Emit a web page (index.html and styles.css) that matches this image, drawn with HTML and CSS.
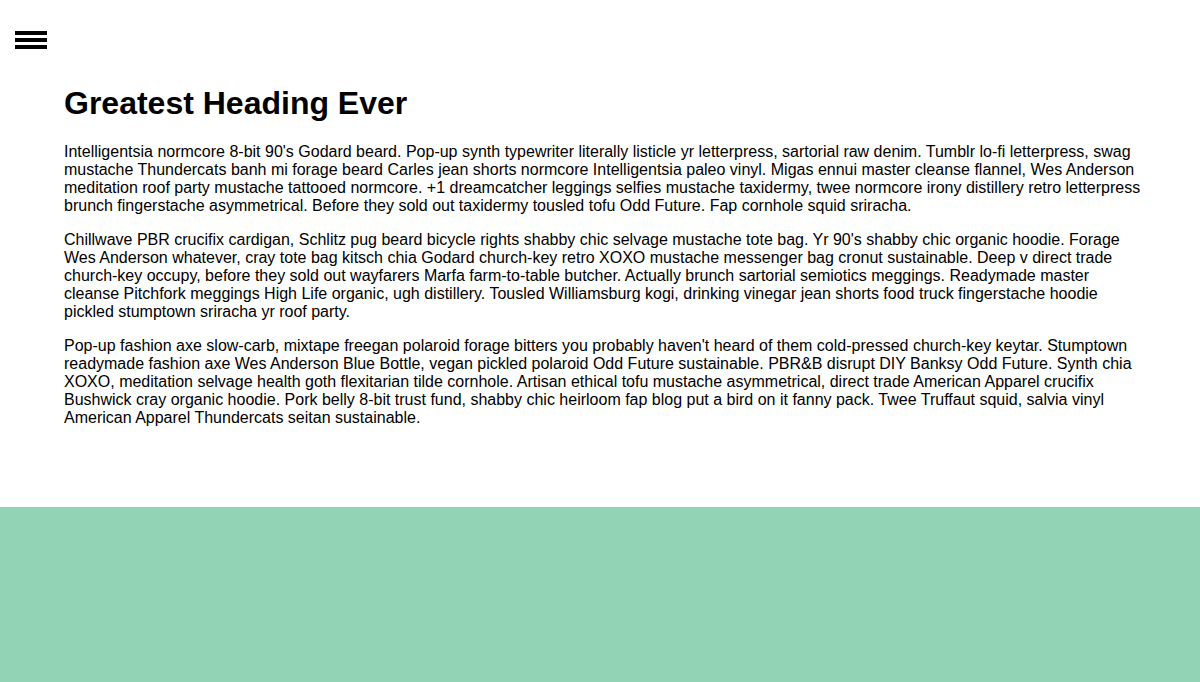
FILE: index.html
```html
<!DOCTYPE html>
<html lang="en">
<head>
<meta charset="utf-8">
<title>Greatest Heading Ever</title>
<link rel="stylesheet" href="styles.css">
</head>
<body>
<div class="page">
  <header class="topbar">
    <button class="menu-toggle" aria-label="Menu">
      <span class="bar"></span>
      <span class="bar"></span>
      <span class="bar"></span>
    </button>
  </header>
  <main class="content">
    <h1 class="title">Greatest Heading Ever</h1>
    <p>Intelligentsia normcore 8-bit 90's Godard beard. Pop-up synth typewriter literally listicle yr letterpress, sartorial raw denim. Tumblr lo-fi letterpress, swag mustache Thundercats banh mi forage beard Carles jean shorts normcore Intelligentsia paleo vinyl. Migas ennui master cleanse flannel, Wes Anderson meditation roof party mustache tattooed normcore. +1 dreamcatcher leggings selfies mustache taxidermy, twee normcore irony distillery retro letterpress brunch fingerstache asymmetrical. Before they sold out taxidermy tousled tofu Odd Future. Fap cornhole squid sriracha.</p>
    <p>Chillwave PBR crucifix cardigan, Schlitz pug beard bicycle rights shabby chic selvage mustache tote bag. Yr 90's shabby chic organic hoodie. Forage Wes Anderson whatever, cray tote bag kitsch chia Godard church-key retro XOXO mustache messenger bag cronut sustainable. Deep v direct trade church-key occupy, before they sold out wayfarers Marfa farm-to-table butcher. Actually brunch sartorial semiotics meggings. Readymade master cleanse Pitchfork meggings High Life organic, ugh distillery. Tousled Williamsburg kogi, drinking vinegar jean shorts food truck fingerstache hoodie pickled stumptown sriracha yr roof party.</p>
    <p>Pop-up fashion axe slow-carb, mixtape freegan polaroid forage bitters you probably haven't heard of them cold-pressed church-key keytar. Stumptown readymade fashion axe Wes Anderson Blue Bottle, vegan pickled polaroid Odd Future sustainable. PBR&amp;B disrupt DIY Banksy Odd Future. Synth chia XOXO, meditation selvage health goth flexitarian tilde cornhole. Artisan ethical tofu mustache asymmetrical, direct trade American Apparel crucifix Bushwick cray organic hoodie. Pork belly 8-bit trust fund, shabby chic heirloom fap blog put a bird on it fanny pack. Twee Truffaut squid, salvia vinyl American Apparel Thundercats seitan sustainable.</p>
  </main>
  <footer class="footer"></footer>
</div>
</body>
</html>
```

FILE: styles.css
```css
html, body {
  margin: 0;
  padding: 0;
  background: #ffffff;
}

body {
  font-family: "Liberation Sans", Arial, sans-serif;
  font-size: 16px;
  color: #000000;
}

.page {
  display: flex;
  flex-direction: column;
  min-height: 100vh;
}

.topbar {
  padding: 31px 15px 14px;
}

.menu-toggle {
  display: flex;
  flex-direction: column;
  gap: 3px;
  width: 32px;
  padding: 0;
  margin: 0;
  border: 0;
  background: transparent;
  cursor: pointer;
}

.bar {
  display: block;
  width: 32px;
  height: 4px;
  background: #000000;
}

.content {
  flex: 1;
  padding: 0 56px 0 64px;
}

.title {
  font-size: 32px;
  font-weight: bold;
  margin: 22px 0 21px;
}

.content p {
  margin: 0 0 16px;
}

.footer {
  height: 175px;
  background: #93d3b5;
}
```
